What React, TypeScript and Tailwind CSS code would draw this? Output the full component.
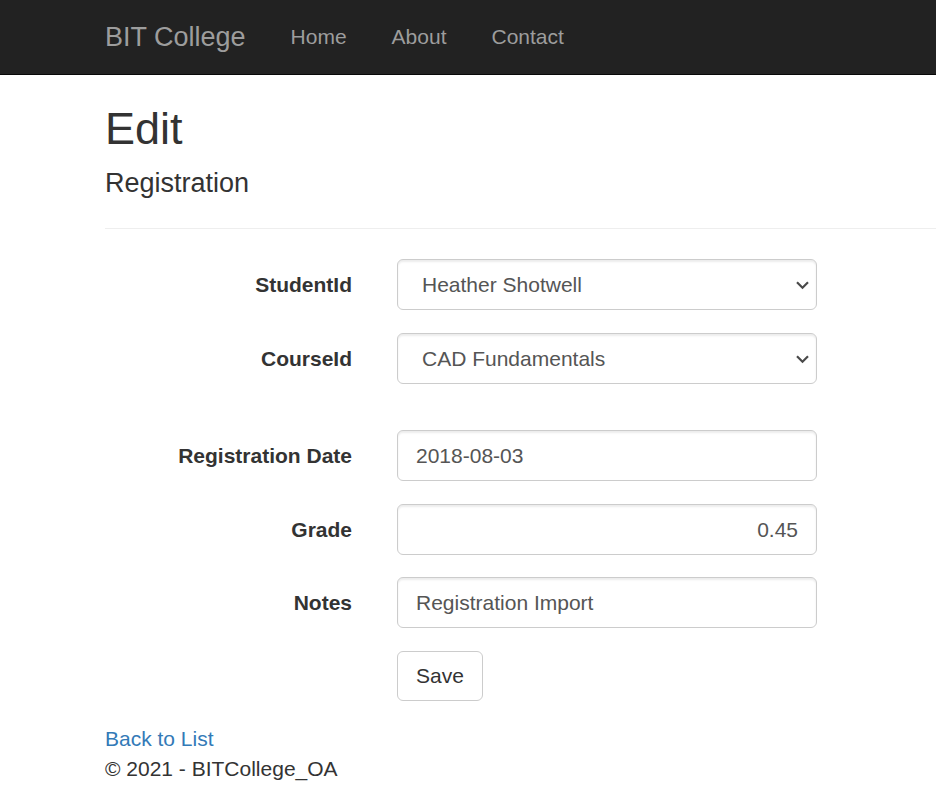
import React from "react";

const controlClass =
  "block h-[51px] w-full max-w-[420px] rounded-md border border-[#cccccc] bg-white px-[18px] text-[#555555] shadow-[inset_0_2px_2px_rgba(0,0,0,0.075)] outline-none";

function Field({ id, label, children }: { id: string; label: string; children: React.ReactNode }) {
  return (
    <div className="flex items-center gap-[45px]">
      <label htmlFor={id} className="w-[247px] shrink-0 text-right font-bold">
        {label}
      </label>
      <div className="min-w-0 flex-1">{children}</div>
    </div>
  );
}

function SelectBox({ id, value }: { id: string; value: string }) {
  return (
    <div className="relative max-w-[420px]">
      <select id={id} className={controlClass + " appearance-none pl-[24px]"}>
        <option>{value}</option>
      </select>
      <svg
        className="pointer-events-none absolute top-[22px] right-[8px] h-[9px] w-[13px]"
        viewBox="0 0 13 9"
        fill="none"
        stroke="#4a4a4a"
        strokeWidth="2.2"
        aria-hidden="true"
      >
        <path d="M1 1.2 6.5 6.7 12 1.2" />
      </svg>
    </div>
  );
}

export default function App() {
  return (
    <div className="overflow-x-hidden bg-white font-['Liberation_Sans',Arial,sans-serif] text-[21px] leading-[30px] text-[#333333]">
      <header className="border-b border-[#080808] bg-[#222222] pl-[105px] text-[#9d9d9d]">
        <nav className="flex h-[74px] items-center gap-[45px]">
          <a href="#" className="text-[27px]">
            BIT College
          </a>
          <a href="#">Home</a>
          <a href="#">About</a>
          <a href="#">Contact</a>
        </nav>
      </header>
      <main className="pl-[105px]">
        <h1 className="pt-[29px] text-[45px] leading-[50px]">Edit</h1>
        <h2 className="mt-[14px] text-[27px] leading-[30px]">Registration</h2>
        <hr className="mt-[30px] border-[#eeeeee]" />
        <form className="mt-[30px]" onSubmit={(e) => e.preventDefault()}>
          <div className="flex flex-col gap-[23px]">
            <Field id="student" label="StudentId">
              <SelectBox id="student" value="Heather Shotwell" />
            </Field>
            <Field id="course" label="CourseId">
              <SelectBox id="course" value="CAD Fundamentals" />
            </Field>
          </div>
          <div className="mt-[46px] flex flex-col gap-[23px]">
            <Field id="date" label="Registration Date">
              <input id="date" type="text" defaultValue="2018-08-03" className={controlClass} />
            </Field>
            <Field id="grade" label="Grade">
              <input id="grade" type="text" defaultValue="0.45" className={controlClass + " text-right"} />
            </Field>
          </div>
          <div className="mt-[22px] flex flex-col gap-[23px]">
            <Field id="notes" label="Notes">
              <input id="notes" type="text" defaultValue="Registration Import" className={controlClass} />
            </Field>
            <div className="pl-[292px]">
              <button type="submit" className="block h-[50px] rounded-md border border-[#cccccc] bg-white px-[18px]">
                Save
              </button>
            </div>
          </div>
        </form>
        <a href="#" className="mt-[23px] block w-fit text-[#337ab7]">
          Back to List
        </a>
        <footer>
          <p>© 2021 - BITCollege_OA</p>
        </footer>
      </main>
    </div>
  );
}
